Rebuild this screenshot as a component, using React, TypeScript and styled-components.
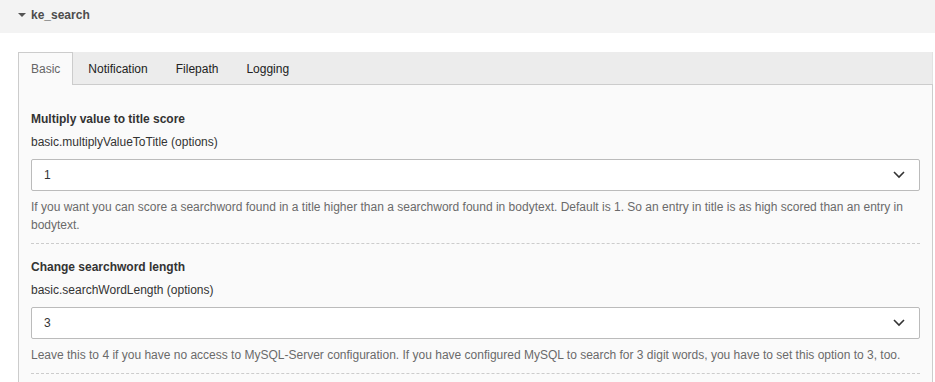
import * as React from "react";
import styled, { createGlobalStyle } from "styled-components";

const GlobalStyle = createGlobalStyle`
  html, body {
    margin: 0;
    padding: 0;
    background: #ffffff;
    font-family: "Liberation Sans", Arial, Helvetica, sans-serif;
    font-size: 12px;
    color: #333333;
  }
`;

const Page = styled.div`
  width: 935px;
  height: 382px;
  overflow: hidden;
`;

const ExtHeader = styled.div`
  height: 33px;
  background: #f3f3f3;
  display: flex;
  align-items: center;
  padding-left: 18px;
  padding-bottom: 4px;
  box-sizing: border-box;
  font-weight: bold;
  color: #4c4c4c;
  gap: 5px;
`;

const Caret = styled.span`
  width: 0;
  height: 0;
  border-left: 4px solid transparent;
  border-right: 4px solid transparent;
  border-top: 4px solid #555555;
`;

const TabContainer = styled.div`
  margin: 19px 2px 0 18px;
`;

const TabNav = styled.div`
  height: 32px;
  background: #ececec;
  display: flex;
  align-items: stretch;
  border-right: 1px solid #e2e2e2;
`;

const Tab = styled.div<{ active?: boolean }>`
  display: flex;
  align-items: center;
  padding: 0 12px;
  margin-right: 2px;
  border: 1px solid ${p => (p.active ? "#cccccc" : "transparent")};
  border-bottom: none;
  background: ${p => (p.active ? "#fafafa" : "transparent")};
  color: ${p => (p.active ? "#666666" : "#222222")};
  margin-bottom: -1px;
  position: relative;
  z-index: 1;
  cursor: pointer;
`;

const TabPanel = styled.div`
  border: 1px solid #cccccc;
  background: #fafafa;
  padding: 11px 12px 0 12px;
  min-height: 400px;
`;

const Section = styled.div`
  padding: 14px 0 9px 0;
  border-bottom: 1px dashed #cccccc;
`;

const Title = styled.div`
  font-weight: bold;
  line-height: 18px;
  color: #333333;
  margin-bottom: 5px;
`;

const FieldName = styled.div`
  line-height: 18px;
  color: #333333;
  margin-bottom: 8px;
`;

const SelectWrap = styled.div`
  position: relative;
  margin-bottom: 7px;
`;

const Select = styled.select`
  appearance: none;
  -webkit-appearance: none;
  width: 100%;
  height: 32px;
  box-sizing: border-box;
  border: 1px solid #bbbbbb;
  border-radius: 2px;
  background: #ffffff;
  padding: 0 30px 0 12px;
  font-family: inherit;
  font-size: 12px;
  color: #333333;
  outline: none;
`;

const Chevron = styled.svg`
  position: absolute;
  right: 15px;
  top: 12px;
  pointer-events: none;
`;

const Description = styled.div`
  line-height: 18px;
  color: #6a6a6a;
`;

interface IFieldProps {
  title: string;
  name: string;
  value: string;
  options: string[];
  description: string;
}

const Field = (props: IFieldProps) => (
  <Section>
    <Title>{props.title}</Title>
    <FieldName>{props.name}</FieldName>
    <SelectWrap>
      <Select defaultValue={props.value}>
        {props.options.map(o => (
          <option key={o} value={o}>{o}</option>
        ))}
      </Select>
      <Chevron width="12" height="8" viewBox="0 0 12 8">
        <polyline points="1,1 6,6 11,1" fill="none" stroke="#333" strokeWidth="1.6" />
      </Chevron>
    </SelectWrap>
    <Description>{props.description}</Description>
  </Section>
);

const fields: IFieldProps[] = [
  {
    title: "Multiply value to title score",
    name: "basic.multiplyValueToTitle (options)",
    value: "1",
    options: ["1", "2", "3", "4", "5"],
    description:
      "If you want you can score a searchword found in a title higher than a searchword found in bodytext. Default is 1. So an entry in title is as high scored than an entry in bodytext.",
  },
  {
    title: "Change searchword length",
    name: "basic.searchWordLength (options)",
    value: "3",
    options: ["3", "4"],
    description:
      "Leave this to 4 if you have no access to MySQL-Server configuration. If you have configured MySQL to search for 3 digit words, you have to set this option to 3, too.",
  },
];

export default function App() {
  const tabs = ["Basic", "Notification", "Filepath", "Logging"];
  return (
    <Page>
      <GlobalStyle />
      <ExtHeader>
        <Caret />
        <span>ke_search</span>
      </ExtHeader>
      <TabContainer>
        <TabNav>
          {tabs.map((t, i) => (
            <Tab key={t} active={i === 0}>{t}</Tab>
          ))}
        </TabNav>
        <TabPanel>
          {fields.map(f => (
            <Field key={f.name} {...f} />
          ))}
        </TabPanel>
      </TabContainer>
    </Page>
  );
}
